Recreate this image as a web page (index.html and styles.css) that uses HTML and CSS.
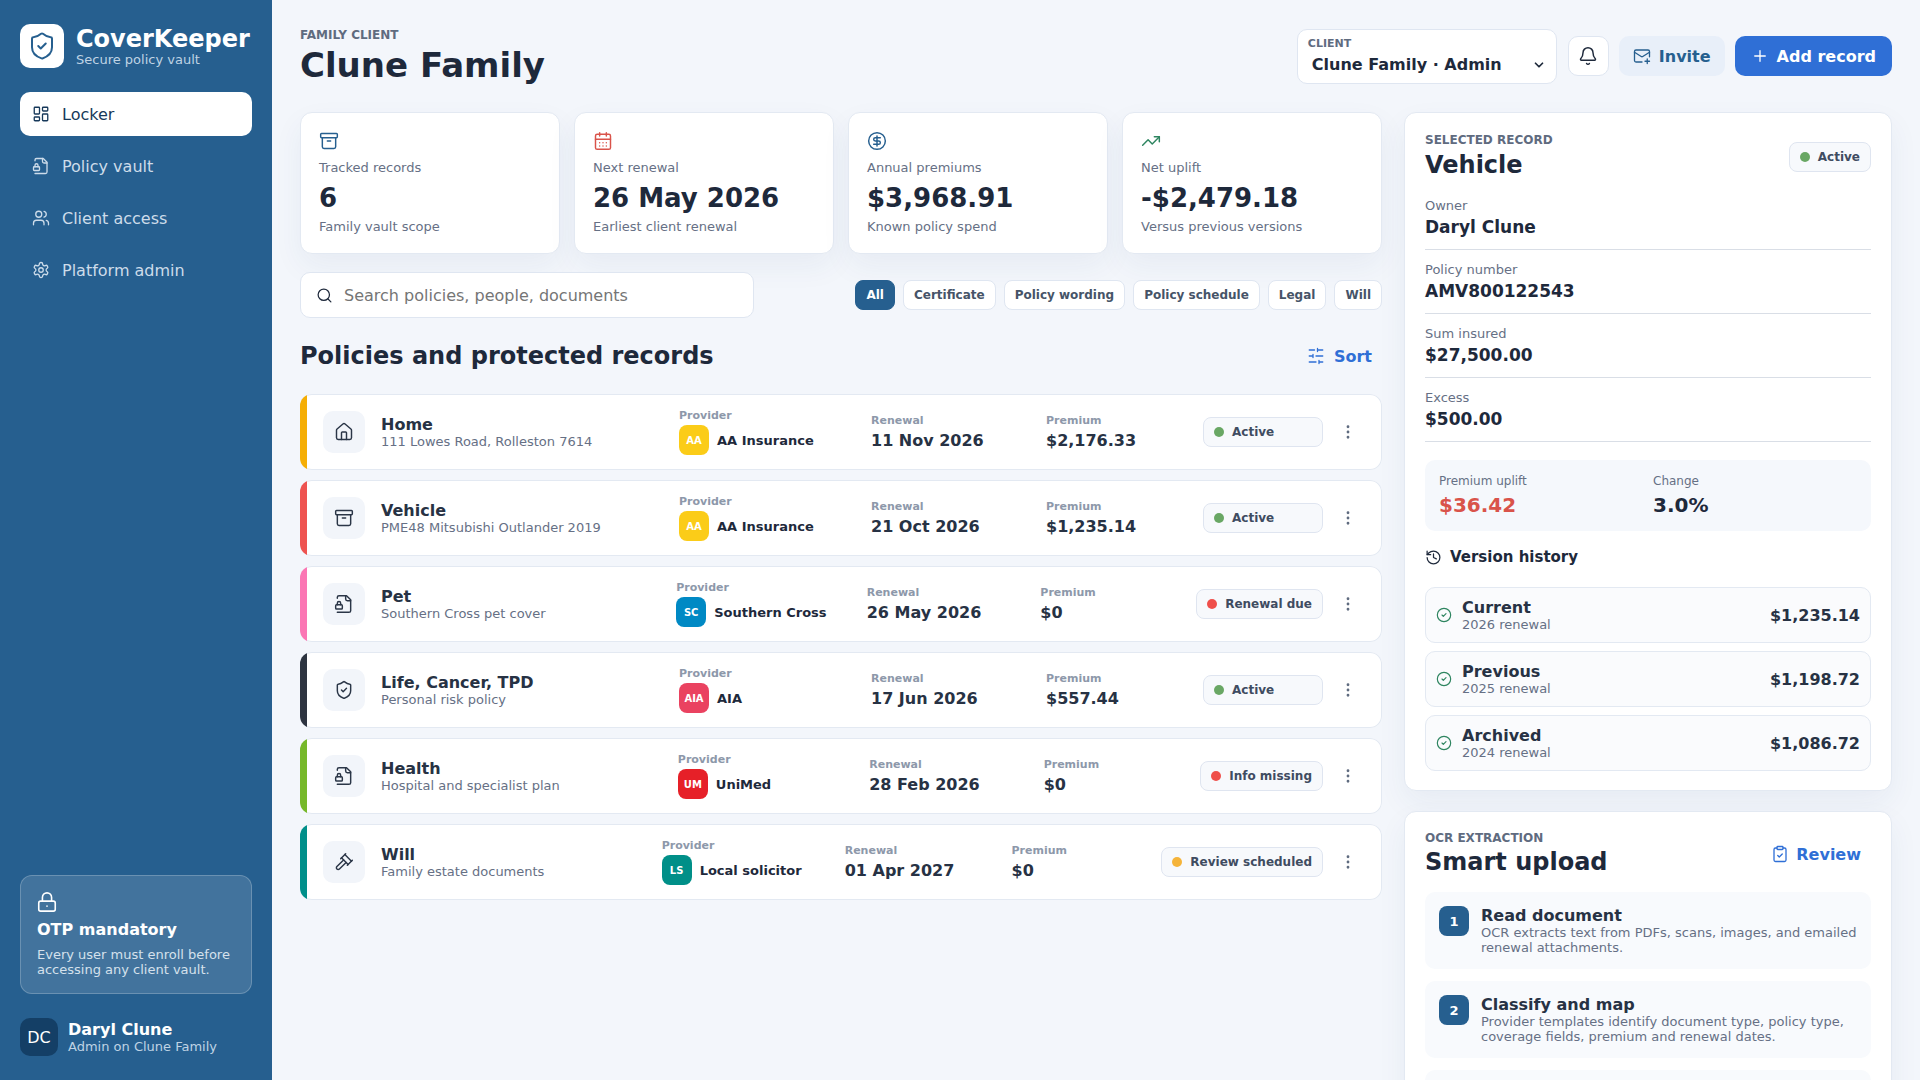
FILE: index.html
```html
<!DOCTYPE html>
<html lang="en">
<head>
<meta charset="utf-8">
<title>CoverKeeper</title>
<link rel="stylesheet" href="styles.css">
</head>
<body>
<svg class="defs" width="0" height="0" aria-hidden="true">
  <symbol id="i-shield" viewBox="0 0 24 24"><path d="M20 13c0 5-3.5 7.5-7.66 8.95a1 1 0 0 1-.67-.01C7.5 20.5 4 18 4 13V6a1 1 0 0 1 1-1c2 0 4.5-1.2 6.24-2.72a1.17 1.17 0 0 1 1.52 0C14.51 3.81 17 5 19 5a1 1 0 0 1 1 1z"/><path d="m9 12 2 2 4-4"/></symbol>
  <symbol id="i-grid" viewBox="0 0 24 24"><rect width="7" height="9" x="3" y="3" rx="1"/><rect width="7" height="5" x="14" y="3" rx="1"/><rect width="7" height="9" x="14" y="12" rx="1"/><rect width="7" height="5" x="3" y="16" rx="1"/></symbol>
  <symbol id="i-filelock" viewBox="0 0 24 24"><path d="M4 22h14a2 2 0 0 0 2-2V7l-5-5H6a2 2 0 0 0-2 2v1"/><path d="M14 2v4a2 2 0 0 0 2 2h4"/><rect width="8" height="5" x="2" y="13" rx="1"/><path d="M8 13v-2a2 2 0 1 0-4 0v2"/></symbol>
  <symbol id="i-users" viewBox="0 0 24 24"><path d="M16 21v-2a4 4 0 0 0-4-4H6a4 4 0 0 0-4 4v2"/><circle cx="9" cy="7" r="4"/><path d="M22 21v-2a4 4 0 0 0-3-3.87"/><path d="M16 3.13a4 4 0 0 1 0 7.75"/></symbol>
  <symbol id="i-gear" viewBox="0 0 24 24"><path d="M12.22 2h-.44a2 2 0 0 0-2 2v.18a2 2 0 0 1-1 1.73l-.43.25a2 2 0 0 1-2 0l-.15-.08a2 2 0 0 0-2.73.73l-.22.38a2 2 0 0 0 .73 2.73l.15.1a2 2 0 0 1 1 1.72v.51a2 2 0 0 1-1 1.74l-.15.09a2 2 0 0 0-.73 2.73l.22.38a2 2 0 0 0 2.73.73l.15-.08a2 2 0 0 1 2 0l.43.25a2 2 0 0 1 1 1.73V20a2 2 0 0 0 2 2h.44a2 2 0 0 0 2-2v-.18a2 2 0 0 1 1-1.73l.43-.25a2 2 0 0 1 2 0l.15.08a2 2 0 0 0 2.73-.73l.22-.39a2 2 0 0 0-.73-2.73l-.15-.08a2 2 0 0 1-1-1.74v-.5a2 2 0 0 1 1-1.74l.15-.09a2 2 0 0 0 .73-2.73l-.22-.38a2 2 0 0 0-2.73-.73l-.15.08a2 2 0 0 1-2 0l-.43-.25a2 2 0 0 1-1-1.73V4a2 2 0 0 0-2-2z"/><circle cx="12" cy="12" r="3"/></symbol>
  <symbol id="i-lock" viewBox="0 0 24 24"><rect width="18" height="11" x="3" y="11" rx="2"/><path d="M7 11V7a5 5 0 0 1 10 0v4"/><path d="M12 16.5h.01"/></symbol>
  <symbol id="i-archive" viewBox="0 0 24 24"><rect width="20" height="5" x="2" y="3" rx="1"/><path d="M4 8v11a2 2 0 0 0 2 2h12a2 2 0 0 0 2-2V8"/><path d="M10 12h4"/></symbol>
  <symbol id="i-cal" viewBox="0 0 24 24"><path d="M8 2v4"/><path d="M16 2v4"/><rect width="18" height="18" x="3" y="4" rx="2"/><path d="M3 10h18"/><path d="M8 14h.01M12 14h.01M16 14h.01M8 18h.01M12 18h.01M16 18h.01"/></symbol>
  <symbol id="i-dollar" viewBox="0 0 24 24"><circle cx="12" cy="12" r="10"/><path d="M16 8h-6a2 2 0 1 0 0 4h4a2 2 0 1 1 0 4H8"/><path d="M12 18V6"/></symbol>
  <symbol id="i-trend" viewBox="0 0 24 24"><path d="M22 7 13.5 15.5 8.5 10.5 2 17"/><path d="M16 7h6v6"/></symbol>
  <symbol id="i-search" viewBox="0 0 24 24"><path d="m21 21-4.34-4.34"/><circle cx="11" cy="11" r="8"/></symbol>
  <symbol id="i-bell" viewBox="0 0 24 24"><path d="M10.268 21a2 2 0 0 0 3.464 0"/><path d="M3.262 15.326A1 1 0 0 0 4 17h16a1 1 0 0 0 .74-1.673C19.41 13.956 18 12.499 18 8A6 6 0 0 0 6 8c0 4.499-1.411 5.956-2.738 7.326"/></symbol>
  <symbol id="i-mail" viewBox="0 0 24 24"><path d="M22 13V6a2 2 0 0 0-2-2H4a2 2 0 0 0-2 2v12c0 1.1.9 2 2 2h8"/><path d="m22 7-8.97 5.7a1.94 1.94 0 0 1-2.06 0L2 7"/><path d="M19 16v6"/><path d="M16 19h6"/></symbol>
  <symbol id="i-plus" viewBox="0 0 24 24"><path d="M5 12h14"/><path d="M12 5v14"/></symbol>
  <symbol id="i-sliders" viewBox="0 0 24 24"><path d="M21 4h-7M10 4H3M21 12h-9M8 12H3M21 20h-5M12 20H3M14 2v4M8 10v4M16 18v4"/></symbol>
  <symbol id="i-home" viewBox="0 0 24 24"><path d="M15 21v-8a1 1 0 0 0-1-1h-4a1 1 0 0 0-1 1v8"/><path d="M3 10a2 2 0 0 1 .709-1.528l7-5.999a2 2 0 0 1 2.582 0l7 5.999A2 2 0 0 1 21 10v9a2 2 0 0 1-2 2H5a2 2 0 0 1-2-2z"/></symbol>
  <symbol id="i-gavel" viewBox="0 0 24 24"><path d="m14.5 12.5-8 8a2.119 2.119 0 1 1-3-3l8-8"/><path d="m16 16 6-6"/><path d="m8 8 6-6"/><path d="m9 7 8 8"/><path d="m21 11-8-8"/></symbol>
  <symbol id="i-history" viewBox="0 0 24 24"><path d="M3 12a9 9 0 1 0 9-9 9.75 9.75 0 0 0-6.74 2.74L3 8"/><path d="M3 3v5h5"/><path d="M12 7v5l4 2"/></symbol>
  <symbol id="i-check" viewBox="0 0 24 24"><circle cx="12" cy="12" r="10"/><path d="m9 12 2 2 4-4"/></symbol>
  <symbol id="i-clip" viewBox="0 0 24 24"><rect width="8" height="4" x="8" y="2" rx="1"/><path d="M16 4h2a2 2 0 0 1 2 2v14a2 2 0 0 1-2 2H6a2 2 0 0 1-2-2V6a2 2 0 0 1 2-2h2"/><path d="m9 14 2 2 4-4"/></symbol>
  <symbol id="i-more" viewBox="0 0 24 24"><circle cx="12" cy="12" r="1"/><circle cx="12" cy="5" r="1"/><circle cx="12" cy="19" r="1"/></symbol>
  <symbol id="i-chev" viewBox="0 0 24 24"><path d="m6 9 6 6 6-6"/></symbol>
</svg>

<div class="app">
  <aside class="sidebar">
    <div class="brand">
      <div class="brand-mark"><svg class="ic ic-30"><use href="#i-shield"/></svg></div>
      <div>
        <div class="brand-name">CoverKeeper</div>
        <div class="brand-sub">Secure policy vault</div>
      </div>
    </div>
    <nav class="nav">
      <a class="nav-item is-active"><svg class="ic ic-18"><use href="#i-grid"/></svg>Locker</a>
      <a class="nav-item"><svg class="ic ic-18"><use href="#i-filelock"/></svg>Policy vault</a>
      <a class="nav-item"><svg class="ic ic-18"><use href="#i-users"/></svg>Client access</a>
      <a class="nav-item"><svg class="ic ic-18"><use href="#i-gear"/></svg>Platform admin</a>
    </nav>
    <div class="otp">
      <svg class="ic ic-22"><use href="#i-lock"/></svg>
      <div class="otp-title">OTP mandatory</div>
      <div class="otp-text">Every user must enroll before accessing any client vault.</div>
    </div>
    <div class="user">
      <div class="avatar">DC</div>
      <div>
        <div class="user-name">Daryl Clune</div>
        <div class="user-role">Admin on Clune Family</div>
      </div>
    </div>
  </aside>

  <main class="main">
    <header class="topbar">
      <div>
        <div class="eyebrow">FAMILY CLIENT</div>
        <h1 class="page-title">Clune Family</h1>
      </div>
      <div class="top-actions">
        <div class="client-select">
          <div class="client-label">CLIENT</div>
          <div class="client-value">Clune Family · Admin<svg class="ic ic-14 chev"><use href="#i-chev"/></svg></div>
        </div>
        <button class="btn btn-icon"><svg class="ic ic-20"><use href="#i-bell"/></svg></button>
        <button class="btn btn-soft"><svg class="ic ic-18"><use href="#i-mail"/></svg>Invite</button>
        <button class="btn btn-primary"><svg class="ic ic-18"><use href="#i-plus"/></svg>Add record</button>
      </div>
    </header>

    <div class="content">
      <section class="left">
        <div class="metrics">
          <div class="metric">
            <svg class="ic ic-20 c-blue"><use href="#i-archive"/></svg>
            <div class="metric-label">Tracked records</div>
            <div class="metric-value">6</div>
            <div class="metric-note">Family vault scope</div>
          </div>
          <div class="metric">
            <svg class="ic ic-20 c-red"><use href="#i-cal"/></svg>
            <div class="metric-label">Next renewal</div>
            <div class="metric-value">26 May 2026</div>
            <div class="metric-note">Earliest client renewal</div>
          </div>
          <div class="metric">
            <svg class="ic ic-20 c-blue"><use href="#i-dollar"/></svg>
            <div class="metric-label">Annual premiums</div>
            <div class="metric-value">$3,968.91</div>
            <div class="metric-note">Known policy spend</div>
          </div>
          <div class="metric">
            <svg class="ic ic-20 c-green"><use href="#i-trend"/></svg>
            <div class="metric-label">Net uplift</div>
            <div class="metric-value">-$2,479.18</div>
            <div class="metric-note">Versus previous versions</div>
          </div>
        </div>

        <div class="tools">
          <label class="search">
            <svg class="ic ic-17"><use href="#i-search"/></svg>
            <input class="search-input" type="text" placeholder="Search policies, people, documents">
          </label>
          <div class="chips">
            <span class="chip is-on">All</span>
            <span class="chip">Certificate</span>
            <span class="chip">Policy wording</span>
            <span class="chip">Policy schedule</span>
            <span class="chip">Legal</span>
            <span class="chip">Will</span>
          </div>
        </div>

        <div class="section-head">
          <h2 class="section-title">Policies and protected records</h2>
          <button class="btn-link"><svg class="ic ic-18"><use href="#i-sliders"/></svg>Sort</button>
        </div>

        <div class="records">
          <article class="record bar-amber">
            <div class="rec-main">
              <div class="rec-icon"><svg class="ic ic-20"><use href="#i-home"/></svg></div>
              <div><div class="rec-title">Home</div><div class="rec-sub">111 Lowes Road, Rolleston 7614</div></div>
            </div>
            <div class="provider"><div class="mini-label">Provider</div><div class="prov-row"><span class="logo l-aa">AA</span><span class="prov-name">AA Insurance</span></div></div>
            <div><div class="mini-label">Renewal</div><div class="cell-value">11 Nov 2026</div></div>
            <div><div class="mini-label">Premium</div><div class="cell-value">$2,176.33</div></div>
            <div class="rec-end"><span class="status"><i class="dot d-green"></i>Active</span><button class="kebab"><svg class="ic ic-18"><use href="#i-more"/></svg></button></div>
          </article>

          <article class="record bar-red">
            <div class="rec-main">
              <div class="rec-icon"><svg class="ic ic-20"><use href="#i-archive"/></svg></div>
              <div><div class="rec-title">Vehicle</div><div class="rec-sub">PME48 Mitsubishi Outlander 2019</div></div>
            </div>
            <div class="provider"><div class="mini-label">Provider</div><div class="prov-row"><span class="logo l-aa">AA</span><span class="prov-name">AA Insurance</span></div></div>
            <div><div class="mini-label">Renewal</div><div class="cell-value">21 Oct 2026</div></div>
            <div><div class="mini-label">Premium</div><div class="cell-value">$1,235.14</div></div>
            <div class="rec-end"><span class="status"><i class="dot d-green"></i>Active</span><button class="kebab"><svg class="ic ic-18"><use href="#i-more"/></svg></button></div>
          </article>

          <article class="record bar-pink">
            <div class="rec-main">
              <div class="rec-icon"><svg class="ic ic-20"><use href="#i-filelock"/></svg></div>
              <div><div class="rec-title">Pet</div><div class="rec-sub">Southern Cross pet cover</div></div>
            </div>
            <div class="provider"><div class="mini-label">Provider</div><div class="prov-row"><span class="logo l-sc">SC</span><span class="prov-name">Southern Cross</span></div></div>
            <div><div class="mini-label">Renewal</div><div class="cell-value">26 May 2026</div></div>
            <div><div class="mini-label">Premium</div><div class="cell-value">$0</div></div>
            <div class="rec-end"><span class="status"><i class="dot d-red"></i>Renewal due</span><button class="kebab"><svg class="ic ic-18"><use href="#i-more"/></svg></button></div>
          </article>

          <article class="record bar-dark">
            <div class="rec-main">
              <div class="rec-icon"><svg class="ic ic-20"><use href="#i-shield"/></svg></div>
              <div><div class="rec-title">Life, Cancer, TPD</div><div class="rec-sub">Personal risk policy</div></div>
            </div>
            <div class="provider"><div class="mini-label">Provider</div><div class="prov-row"><span class="logo l-aia">AIA</span><span class="prov-name">AIA</span></div></div>
            <div><div class="mini-label">Renewal</div><div class="cell-value">17 Jun 2026</div></div>
            <div><div class="mini-label">Premium</div><div class="cell-value">$557.44</div></div>
            <div class="rec-end"><span class="status"><i class="dot d-green"></i>Active</span><button class="kebab"><svg class="ic ic-18"><use href="#i-more"/></svg></button></div>
          </article>

          <article class="record bar-lime">
            <div class="rec-main">
              <div class="rec-icon"><svg class="ic ic-20"><use href="#i-filelock"/></svg></div>
              <div><div class="rec-title">Health</div><div class="rec-sub">Hospital and specialist plan</div></div>
            </div>
            <div class="provider"><div class="mini-label">Provider</div><div class="prov-row"><span class="logo l-um">UM</span><span class="prov-name">UniMed</span></div></div>
            <div><div class="mini-label">Renewal</div><div class="cell-value">28 Feb 2026</div></div>
            <div><div class="mini-label">Premium</div><div class="cell-value">$0</div></div>
            <div class="rec-end"><span class="status"><i class="dot d-red"></i>Info missing</span><button class="kebab"><svg class="ic ic-18"><use href="#i-more"/></svg></button></div>
          </article>

          <article class="record bar-teal">
            <div class="rec-main">
              <div class="rec-icon"><svg class="ic ic-20"><use href="#i-gavel"/></svg></div>
              <div><div class="rec-title">Will</div><div class="rec-sub">Family estate documents</div></div>
            </div>
            <div class="provider"><div class="mini-label">Provider</div><div class="prov-row"><span class="logo l-ls">LS</span><span class="prov-name">Local solicitor</span></div></div>
            <div><div class="mini-label">Renewal</div><div class="cell-value">01 Apr 2027</div></div>
            <div><div class="mini-label">Premium</div><div class="cell-value">$0</div></div>
            <div class="rec-end"><span class="status"><i class="dot d-amber"></i>Review scheduled</span><button class="kebab"><svg class="ic ic-18"><use href="#i-more"/></svg></button></div>
          </article>
        </div>
      </section>

      <aside class="right">
        <section class="panel panel-record">
          <div class="panel-head">
            <div>
              <div class="eyebrow">SELECTED RECORD</div>
              <h2 class="panel-title">Vehicle</h2>
            </div>
            <span class="status status-tight"><i class="dot d-green"></i>Active</span>
          </div>
          <dl class="fields">
            <div class="field"><dt>Owner</dt><dd>Daryl Clune</dd></div>
            <div class="field"><dt>Policy number</dt><dd>AMV800122543</dd></div>
            <div class="field"><dt>Sum insured</dt><dd>$27,500.00</dd></div>
            <div class="field"><dt>Excess</dt><dd>$500.00</dd></div>
          </dl>
          <div class="uplift">
            <div><div class="uplift-label">Premium uplift</div><div class="uplift-value c-red">$36.42</div></div>
            <div><div class="uplift-label">Change</div><div class="uplift-value">3.0%</div></div>
          </div>
          <div class="vh-title"><svg class="ic ic-17"><use href="#i-history"/></svg>Version history</div>
          <div class="versions">
            <div class="version"><svg class="ic ic-16 c-green"><use href="#i-check"/></svg><div class="ver-text"><div class="ver-name">Current</div><div class="ver-sub">2026 renewal</div></div><div class="ver-amt">$1,235.14</div></div>
            <div class="version"><svg class="ic ic-16 c-green"><use href="#i-check"/></svg><div class="ver-text"><div class="ver-name">Previous</div><div class="ver-sub">2025 renewal</div></div><div class="ver-amt">$1,198.72</div></div>
            <div class="version"><svg class="ic ic-16 c-green"><use href="#i-check"/></svg><div class="ver-text"><div class="ver-name">Archived</div><div class="ver-sub">2024 renewal</div></div><div class="ver-amt">$1,086.72</div></div>
          </div>
        </section>

        <section class="panel panel-upload">
          <div class="panel-head upload-head">
            <div>
              <div class="eyebrow">OCR EXTRACTION</div>
              <h2 class="panel-title">Smart upload</h2>
            </div>
            <button class="btn-link"><svg class="ic ic-18"><use href="#i-clip"/></svg>Review</button>
          </div>
          <div class="steps">
            <div class="step"><span class="step-num">1</span><div><div class="step-title">Read document</div><div class="step-text">OCR extracts text from PDFs, scans, images, and emailed renewal attachments.</div></div></div>
            <div class="step"><span class="step-num">2</span><div><div class="step-title">Classify and map</div><div class="step-text">Provider templates identify document type, policy type, coverage fields, premium and renewal dates.</div></div></div>
            <div class="step step-empty"></div>
          </div>
        </section>
      </aside>
    </div>
  </main>
</div>
</body>
</html>
```

FILE: styles.css
```css
* { box-sizing: border-box; }
html, body { margin: 0; height: 100%; overflow: hidden; }
body {
  font-family: "DejaVu Sans", sans-serif;
  color: #1e293b;
  background: #f3f6fb;
}
.defs { position: absolute; }
h1, h2, dl, dd { margin: 0; }
button { font-family: inherit; cursor: pointer; }

.ic {
  fill: none;
  stroke: currentColor;
  stroke-width: 1.75;
  stroke-linecap: round;
  stroke-linejoin: round;
  flex: none;
  display: block;
}
.ic-14 { width: 14px; height: 14px; }
.ic-16 { width: 16px; height: 16px; }
.ic-17 { width: 17px; height: 17px; }
.ic-18 { width: 18px; height: 18px; }
.ic-20 { width: 20px; height: 20px; }
.ic-22 { width: 22px; height: 22px; }
.ic-30 { width: 30px; height: 30px; }
.c-blue { color: #265f8f; }
.c-red { color: #d9534a; }
.c-green { color: #2e8560; }

.app { display: flex; height: 100vh; }

/* Sidebar */
.sidebar {
  width: 272px;
  flex: none;
  background: #265f8f;
  color: #fff;
  padding: 24px 20px;
  display: flex;
  flex-direction: column;
}
.brand { display: flex; align-items: center; gap: 12px; margin-bottom: 24px; }
.brand-mark {
  width: 44px; height: 44px;
  background: #fff;
  border-radius: 10px;
  color: #265f8f;
  display: flex; align-items: center; justify-content: center;
}
.brand-mark .ic { stroke-width: 1.6; }
.brand-name { font-size: 24px; font-weight: 700; line-height: 26px; }
.brand-sub { font-size: 13px; line-height: 15px; color: #bfd3e4; }
.nav { display: flex; flex-direction: column; gap: 8px; }
.nav-item {
  height: 44px;
  display: flex; align-items: center; gap: 12px;
  padding: 0 12px;
  border-radius: 10px;
  font-size: 16px;
  color: #cddcea;
}
.nav-item.is-active { background: #fff; color: #17395a; }
.otp {
  margin-top: auto;
  padding: 16px;
  height: 119px;
  border-radius: 12px;
  background: rgba(255, 255, 255, .13);
  border: 1px solid rgba(255, 255, 255, .22);
}
.otp .ic { margin: -1px 0 0 -1px; }
.otp-title { font-size: 16px; font-weight: 700; line-height: 20px; margin-top: 7px; }
.otp-text { font-size: 13px; line-height: 15px; color: #d5e1ec; margin-top: 7px; }
.user { display: flex; align-items: center; gap: 10px; margin-top: 24px; }
.avatar {
  width: 38px; height: 38px;
  border-radius: 10px;
  background: #143f66;
  display: flex; align-items: center; justify-content: center;
  font-size: 16px;
}
.user-name { font-size: 16px; font-weight: 700; line-height: 19px; }
.user-role { font-size: 13px; line-height: 16px; color: #bfd3e4; }

/* Main */
.main { flex: 1; min-width: 0; padding: 28px; overflow: hidden; }
.topbar { display: flex; justify-content: space-between; align-items: center; height: 56px; margin-bottom: 28px; }
.eyebrow { font-size: 12px; font-weight: 700; line-height: 14px; color: #5f6b7f; }
.page-title { font-size: 34px; font-weight: 700; line-height: 38px; margin-top: 4px; }
.top-actions { display: flex; align-items: center; gap: 10px; }
.client-select {
  width: 260px; height: 55px;
  margin-right: 1px;
  background: #fff;
  border: 1px solid #dfe6f1;
  border-radius: 10px;
  padding: 7px 10px;
}
.client-label { font-size: 11px; font-weight: 700; line-height: 13px; color: #5f6b7f; }
.client-value {
  display: flex; justify-content: space-between; align-items: center;
  font-size: 16px; font-weight: 700; line-height: 22px;
  padding-left: 4px;
  margin-top: 4px;
}
.chev { stroke-width: 3; }
.btn {
  height: 40px;
  border: 1px solid transparent;
  border-radius: 10px;
  display: flex; align-items: center; gap: 8px;
  padding: 0 14px;
  font-size: 16px;
  font-weight: 700;
}
.btn-icon { width: 41px; padding: 0; justify-content: center; background: #fff; border-color: #dfe6f1; color: #1e293b; }
.btn-soft { background: #e8eff9; color: #265f8f; padding: 0 13px; }
.btn-primary { background: #2f6fd6; color: #fff; padding: 0 15px; }
.content { display: grid; grid-template-columns: 1082px 488px; gap: 22px; align-items: start; }

/* Metrics */
.metrics { display: grid; grid-template-columns: repeat(4, 1fr); gap: 14px; }
.metric {
  height: 142px;
  background: #fff;
  border: 1px solid #e3e9f2;
  border-radius: 12px;
  padding: 18px;
  box-shadow: 0 12px 30px rgba(40, 70, 120, .06);
}
.metric-label { font-size: 13px; line-height: 16px; color: #667085; margin-top: 9px; }
.metric-value { font-size: 26px; font-weight: 700; line-height: 32px; margin-top: 6px; }
.metric-note { font-size: 13px; line-height: 16px; color: #667085; margin-top: 5px; }

/* Tools */
.tools { display: flex; justify-content: space-between; align-items: center; margin-top: 18px; }
.search {
  width: 454px; height: 46px;
  background: #fff;
  border: 1px solid #dfe6f1;
  border-radius: 10px;
  display: flex; align-items: center; gap: 11px;
  padding: 0 15px;
}
.search-input {
  flex: 1; min-width: 0;
  border: 0; outline: 0; padding: 0; background: none;
  font-family: inherit; font-size: 16px;
}
.chips { display: flex; gap: 8px; }
.chip {
  height: 30px;
  padding: 0 10px;
  background: #fff;
  border: 1px solid #dfe6f1;
  border-radius: 8px;
  display: flex; align-items: center;
  font-size: 12px; font-weight: 700;
  color: #465468;
}
.chip.is-on { background: #265f8f; border-color: #265f8f; color: #fff; }

.section-head { display: flex; justify-content: space-between; align-items: center; margin-top: 18px; height: 40px; margin-bottom: 18px; }
.section-title { font-size: 24px; font-weight: 700; line-height: 30px; }
.btn-link {
  border: 0; background: none;
  display: flex; align-items: center; gap: 9px;
  padding: 0 10px;
  font-size: 16px; font-weight: 700;
  color: #2f6fd6;
}

/* Records */
.records { display: flex; flex-direction: column; gap: 10px; }
.record {
  position: relative;
  overflow: hidden;
  height: 76px;
  background: #fff;
  box-shadow: inset 0 0 0 1px #e3e9f2;
  border-radius: 12px;
  padding: 0 17px 0 23px;
  display: grid;
  grid-template-columns: 3.4fr 1.76fr 1.59fr 1.41fr auto;
  gap: 16px;
  align-items: center;
}
.record::before {
  content: "";
  position: absolute;
  left: 0; top: 0; bottom: 0;
  width: 7px;
  background: var(--bar);
}
.bar-amber { --bar: #f5ae05; }
.bar-red { --bar: #ee5350; }
.bar-pink { --bar: #fb76b4; }
.bar-dark { --bar: #2d3440; }
.bar-lime { --bar: #76b82a; }
.bar-teal { --bar: #008f8a; }
.rec-main { display: flex; align-items: center; gap: 16px; min-width: 0; }
.rec-icon {
  width: 42px; height: 42px; flex: none;
  background: #f2f5fa;
  border-radius: 10px;
  display: flex; align-items: center; justify-content: center;
  color: #2b3647;
}
.rec-title { font-size: 16px; font-weight: 700; line-height: 19px; color: #273244; }
.rec-sub { font-size: 13px; line-height: 15px; color: #667085; }
.mini-label { font-size: 11px; font-weight: 700; line-height: 13px; color: #8d98aa; }
.cell-value { font-size: 16px; font-weight: 700; line-height: 20px; color: #273244; margin-top: 4px; }
.prov-row { display: flex; align-items: center; gap: 8px; margin-top: 3px; }
.logo {
  width: 30px; height: 30px; flex: none;
  border-radius: 8px;
  display: flex; align-items: center; justify-content: center;
  color: #fff; font-size: 10px; font-weight: 700;
}
.l-aa { background: #fbcc18; }
.l-sc { background: #0089c4; }
.l-aia { background: #ea4260; }
.l-um { background: #e62028; }
.l-ls { background: #008f88; }
.prov-name { font-size: 13px; font-weight: 700; color: #1e293b; }
.rec-end { display: flex; align-items: center; gap: 8px; }
.status {
  height: 30px; min-width: 120px;
  padding: 0 10px;
  background: #f7f9fc;
  border: 1px solid #dfe5f0;
  border-radius: 8px;
  display: flex; align-items: center; gap: 8px;
  font-size: 12px; font-weight: 700;
  color: #3f4c61;
  white-space: nowrap;
}
.status-tight { min-width: 0; }
.dot { width: 10px; height: 10px; border-radius: 50%; flex: none; }
.d-green { background: #69a764; }
.d-red { background: #ef4f4a; }
.d-amber { background: #f5b43a; }
.kebab {
  width: 34px; height: 34px;
  border: 0; background: none; padding: 0;
  display: flex; align-items: center; justify-content: center;
  color: #5f6b7f;
}

/* Right column */
.right { display: flex; flex-direction: column; gap: 20px; }
.panel {
  background: #fff;
  border: 1px solid #e3e9f2;
  border-radius: 12px;
  padding: 20px 20px 19px;
  box-shadow: 0 12px 30px rgba(40, 70, 120, .06);
}
.panel-head { display: flex; justify-content: space-between; align-items: center; }
.panel-title { font-size: 24px; font-weight: 700; line-height: 30px; margin-top: 3px; }
.panel-upload { padding-top: 19px; }
.panel-upload .panel-title { margin-top: 2px; }
.fields { margin-top: 18px; }
.field { margin-bottom: 12px; border-bottom: 1px solid #d9dee6; height: 52px; }
.field dt { font-size: 13px; line-height: 16px; color: #667085; }
.field dd { font-size: 17px; font-weight: 700; line-height: 22px; color: #1e293b; margin-top: 2px; }
.uplift {
  margin-top: 18px;
  height: 71px;
  padding: 13px 14px;
  background: #f5f8fc;
  border-radius: 10px;
  display: grid;
  grid-template-columns: 1fr 1fr;
  gap: 10px;
}
.uplift-label { font-size: 12px; line-height: 16px; color: #667085; }
.uplift-value { font-size: 20px; font-weight: 700; line-height: 26px; margin-top: 3px; }
.vh-title { display: flex; align-items: center; gap: 8px; margin-top: 16px; height: 20px; font-size: 15px; font-weight: 700; }
.versions { display: flex; flex-direction: column; gap: 8px; margin-top: 20px; }
.version {
  height: 56px;
  background: #fafbfd;
  border: 1px solid #e3e9f2;
  border-radius: 10px;
  display: flex; align-items: center; gap: 10px;
  padding: 0 10px;
}
.ver-text { flex: 1; }
.ver-name { font-size: 16px; font-weight: 700; line-height: 19px; color: #273244; }
.ver-sub { font-size: 13px; line-height: 15px; color: #667085; }
.ver-amt { font-size: 16px; font-weight: 700; color: #273244; }
.upload-head { margin-bottom: 15px; }
.upload-head .btn-link { gap: 7px; padding: 0 10px 0 8px; }
.steps { display: flex; flex-direction: column; gap: 12px; }
.step {
  min-height: 77px;
  background: #f8fafd;
  border-radius: 10px;
  padding: 14px;
  display: flex; gap: 12px;
}
.step-num {
  width: 30px; height: 30px; flex: none;
  background: #265f8f; color: #fff;
  border-radius: 8px;
  display: flex; align-items: center; justify-content: center;
  font-size: 13px; font-weight: 700;
}
.step-title { font-size: 16px; font-weight: 700; line-height: 19px; color: #273244; }
.step-text { font-size: 13px; line-height: 15px; color: #667085; }
```
